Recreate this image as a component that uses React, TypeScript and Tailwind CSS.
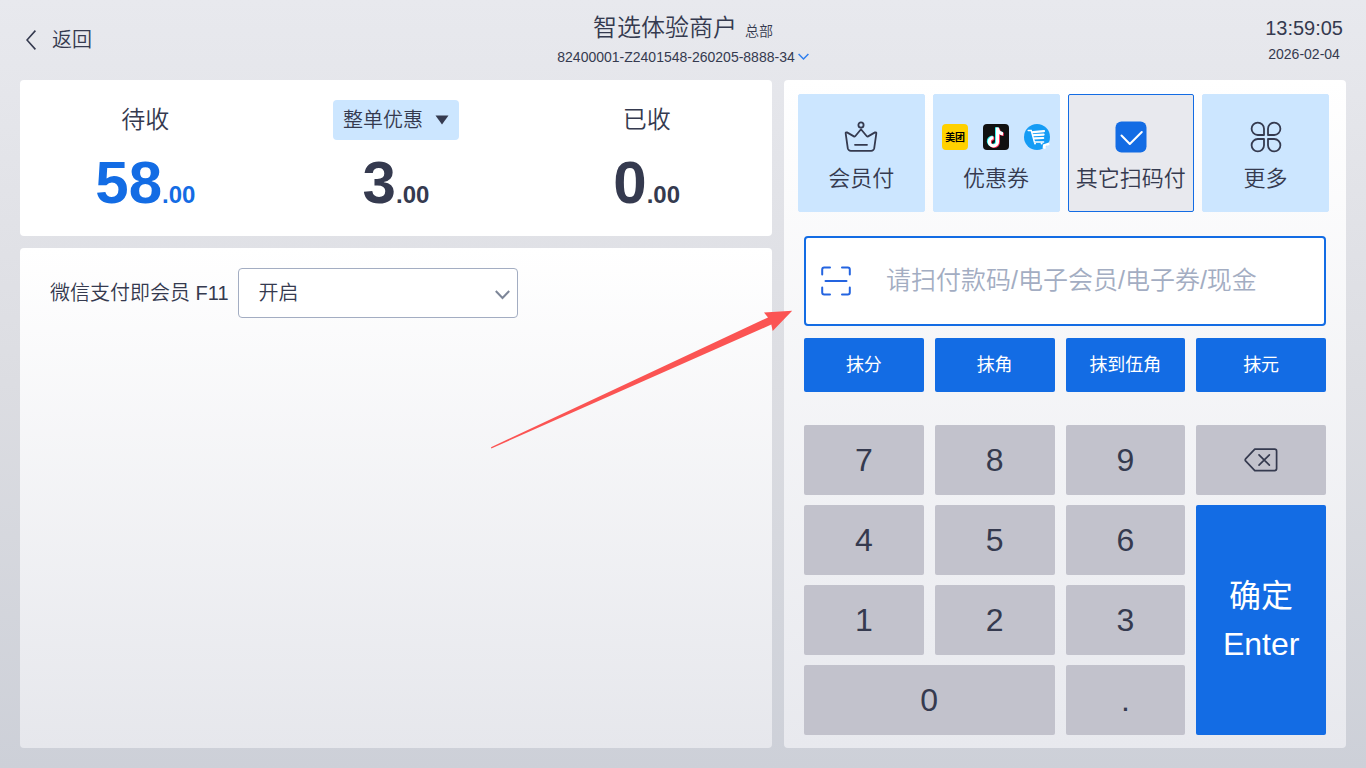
import { useState } from "react";

const AMOUNTS = [
  { label: "待收", int: "58", dec: ".00", color: "text-[#136ce4]" },
  { label: "整单优惠", int: "3", dec: ".00", color: "text-[#353a4f]", menu: true },
  { label: "已收", int: "0", dec: ".00", color: "text-[#353a4f]" },
];

const ROUNDING = ["抹分", "抹角", "抹到伍角", "抹元"];

const KEYPAD_COLS = "grid grid-cols-[120fr_120fr_120fr_130fr] gap-x-[11px]";
const KEY = "flex items-center justify-center rounded-xs bg-[#c2c2cc] text-[32px]";

const CrownIcon = () => (
  <svg width="34" height="32" viewBox="0 0 34 32" fill="none" stroke="currentColor" strokeWidth="1.8" strokeLinecap="round" strokeLinejoin="round">
    <circle cx="17" cy="4" r="2.6" />
    <path d="M17 8.2 L22.8 15.2 Q23.4 15.8 24.1 15.4 L31 11.4 Q32.6 11 32.3 12.6 L30.2 27.4 Q29.6 29.8 27.2 29.8 H6.8 Q4.4 29.8 3.8 27.4 L1.7 12.6 Q1.4 11 3 11.4 L9.9 15.4 Q10.6 15.8 11.2 15.2 Z" />
    <path d="M11 23.8 H23" />
  </svg>
);

const DouyinLogo = () => (
  <svg width="26" height="26" viewBox="0 0 26 26">
    <rect width="26" height="26" rx="4" fill="#111" />
    <g fill="none" strokeWidth="3.2">
      <path d="M13.6 3.2 V17.2 A4.1 4.1 0 1 1 9.5 13.1 M13.6 3.6 C14 7.4 16 9 19.2 9.2" stroke="#25f4ee" />
      <path d="M15.4 4.4 V18.2 A4.1 4.1 0 1 1 11.3 14.3 M15.4 5 C15.8 8.6 17.8 10.2 20.8 10.4" stroke="#fe2c55" />
      <path d="M14.5 3.6 V17.7 A4.1 4.1 0 1 1 10.4 13.6 M14.5 4.2 C14.9 7.9 16.9 9.6 20 9.8" stroke="#fff" />
    </g>
  </svg>
);

const CartLogo = () => (
  <svg width="26" height="26" viewBox="0 0 26 26">
    <circle cx="13" cy="13" r="13" fill="#159cf5" />
    <g fill="none" stroke="#fff" strokeLinecap="round">
      <path d="M4.2 6.4 H7.2 L10.4 18 H19.6" strokeWidth="1.5" />
      <path d="M9 8.2 L20 7.2 M9.8 11.2 L19.6 10.6 M10.6 14.4 L19.2 14" strokeWidth="2.2" />
    </g>
    <circle cx="11" cy="19.4" r="1" fill="#fff" />
    <circle cx="17.6" cy="19.4" r="1" fill="#fff" />
    <path d="M18.6 24.6 L19 20.6 L24.8 18.6 L25.6 21 L22 22 L21.4 25 Z" fill="#fff" />
  </svg>
);

const CheckedIcon = () => (
  <svg width="32" height="32" viewBox="0 0 32 32" fill="none">
    <rect x="0.5" y="0.5" width="31" height="31" rx="6" fill="#136ce4" />
    <path d="M6.5 14.5 L14.8 23 L26.8 11" stroke="#fff" strokeWidth="2" strokeLinecap="round" strokeLinejoin="round" />
  </svg>
);

const MoreIcon = () => (
  <svg width="32" height="32" viewBox="0 0 32 32" fill="none" stroke="currentColor" strokeWidth="1.8" strokeLinejoin="round">
    <path d="M14 14 H7.8 A6.2 6.2 0 1 1 14 7.8 Z" />
    <path d="M18 14 H24.2 A6.2 6.2 0 1 0 18 7.8 Z" />
    <path d="M14 18 H7.8 A6.2 6.2 0 1 0 14 24.2 Z" />
    <path d="M18 18 H24.2 A6.2 6.2 0 1 1 18 24.2 Z" />
  </svg>
);

const ScanIcon = () => (
  <svg width="30" height="30" viewBox="0 0 30 30" fill="none" stroke="#2464e0" strokeWidth="2" strokeLinecap="round" strokeLinejoin="round">
    <path d="M1.2 8.6 V3.4 Q1.2 1.4 3.2 1.4 H9 M21 1.4 H26.8 Q28.8 1.4 28.8 3.4 V8.6 M28.8 21.4 V26.6 Q28.8 28.6 26.8 28.6 H21 M9 28.6 H3.2 Q1.2 28.6 1.2 26.6 V21.4" />
    <path d="M4.5 15 H25.5" />
  </svg>
);

const DeleteIcon = () => (
  <svg width="34" height="24" viewBox="0 0 34 24" fill="none" stroke="currentColor" strokeWidth="1.7" strokeLinecap="round" strokeLinejoin="round">
    <path d="M10.8 1.2 H30.6 Q32.6 1.2 32.6 3.2 V20.6 Q32.6 22.6 30.6 22.6 H10.8 L1.8 13.2 Q0.6 11.9 1.8 10.6 Z" />
    <path d="M15 6.8 L25.4 17.2 M25.4 6.8 L15 17.2" />
  </svg>
);

const PAY_METHODS = [
  { name: "会员付", icon: <CrownIcon /> },
  {
    name: "优惠券",
    icon: (
      <span className="flex items-center gap-[15px]">
        <span className="flex size-[26px] items-center justify-center rounded bg-[#ffd100] text-[10px] font-bold text-black">美团</span>
        <DouyinLogo />
        <CartLogo />
      </span>
    ),
  },
  { name: "其它扫码付", icon: <CheckedIcon /> },
  { name: "更多", icon: <MoreIcon /> },
];

const CheckoutPage: React.FC = () => {
  const [method, setMethod] = useState("其它扫码付");
  const [code, setCode] = useState("");
  const [wechatMember, setWechatMember] = useState("开启");

  const press = (key: string) => setCode((prev) => prev + key);

  return (
    <div className="relative flex min-h-screen flex-col bg-linear-to-b from-[#e8e9ee] via-[#dcdde2] to-[#cdd0d8] px-5 pb-5 font-['Liberation_Sans','Noto_Sans_CJK_SC',sans-serif] font-[350] text-[#353a4f]">

      {/* Header */}
      <header className="grid h-20 grid-cols-[1fr_auto_1fr] items-start">
        <button className="mt-6 flex h-8 items-center gap-4 justify-self-start pl-[6px] text-xl">
          <svg width="10" height="20" viewBox="0 0 10 20" fill="none" stroke="currentColor" strokeWidth="1.6">
            <path d="M9.4 0.6 L1 10 L9.4 19.4" />
          </svg>
          返回
        </button>
        <div className="flex flex-col items-center pt-3">
          <h1 className="flex items-baseline gap-2 text-2xl leading-8">
            智选体验商户 <small className="text-sm">总部</small>
          </h1>
          <button className="flex h-[26px] items-center gap-[3px] text-sm">
            82400001-Z2401548-260205-8888-34
            <svg width="11" height="8" viewBox="0 0 11 8" fill="none" stroke="#2f7fee" strokeWidth="1.5">
              <path d="M0.6 1 L5.5 6 L10.4 1" />
            </svg>
          </button>
        </div>
        <div className="flex flex-col items-center justify-self-end pr-[3px] pt-[14px]">
          <time className="text-xl leading-7">13:59:05</time>
          <time className="text-sm leading-6">2026-02-04</time>
        </div>
      </header>

      <main className="grid flex-1 grid-cols-[752fr_562fr] gap-3">
        <div className="flex flex-col gap-3">
          {/* Amounts */}
          <section className="grid h-[156px] grid-cols-3 rounded bg-white pt-5">
            {AMOUNTS.map((item) => (
              <div key={item.label} className="flex flex-col items-center">
                {item.menu ? (
                  <button className="flex h-10 items-center gap-3 rounded bg-[#cce6ff] px-[10px] text-xl">
                    {item.label}
                    <svg width="14" height="10" viewBox="0 0 14 10" fill="currentColor">
                      <path d="M0.5 0.5 H13.5 L7 9.5 Z" />
                    </svg>
                  </button>
                ) : (
                  <h2 className="flex h-10 items-center text-2xl">{item.label}</h2>
                )}
                <p className={`mt-2 font-bold leading-[70px] ${item.color}`}>
                  <span className="text-[60px]">{item.int}</span>
                  <span className="text-2xl">{item.dec}</span>
                </p>
              </div>
            ))}
          </section>

          {/* Options */}
          <section className="flex-1 rounded bg-linear-to-b from-white to-[#e6e7ec] px-[30px] pt-5">
            <div className="flex items-center gap-[9px] text-xl">
              <label htmlFor="wechat-member">微信支付即会员 F11</label>
              <div className="relative">
                <select
                  id="wechat-member"
                  value={wechatMember}
                  onChange={(e) => setWechatMember(e.target.value)}
                  className="h-[50px] w-[280px] appearance-none rounded border border-[#a3adc2] bg-white pl-5"
                >
                  <option>开启</option>
                  <option>关闭</option>
                </select>
                <svg className="pointer-events-none absolute right-2 top-[22px]" width="15" height="10" viewBox="0 0 15 10" fill="none" stroke="#7d8698" strokeWidth="2">
                  <path d="M0.8 1 L7.5 8 L14.2 1" />
                </svg>
              </div>
            </div>
          </section>
        </div>

        {/* Payment panel */}
        <section className="flex flex-col rounded bg-linear-to-b from-white to-[#e8e9ee] pb-[13px] pt-[14px]">
          <div className="grid grid-cols-4 gap-2 pl-[14px] pr-[17px]">
            {PAY_METHODS.map((m) => (
              <button
                key={m.name}
                onClick={() => setMethod(m.name)}
                className={`flex h-[118px] flex-col items-center justify-center gap-2 whitespace-nowrap rounded-xs border pt-3 text-[22px] ${
                  method === m.name ? "border-[#136ce4] bg-[#e8e9ee]" : "border-[#cce6ff] bg-[#cce6ff]"
                }`}
              >
                <span className="flex h-8 items-center">{m.icon}</span>
                <span className="leading-9">{m.name}</span>
              </button>
            ))}
          </div>

          <div className="flex flex-1 flex-col px-5 pt-6">
            <label className="flex h-[90px] items-center gap-[35px] rounded border-2 border-[#136ce4] bg-white px-[15px]">
              <ScanIcon />
              <input
                value={code}
                onChange={(e) => setCode(e.target.value)}
                aria-label="付款码"
                placeholder="请扫付款码/电子会员/电子券/现金"
                className="min-w-0 flex-1 text-[25px] outline-none placeholder:text-[#a3adc2]"
              />
            </label>

            <div className={`mt-3 ${KEYPAD_COLS}`}>
              {ROUNDING.map((r) => (
                <button key={r} className="h-[54px] rounded-xs bg-[#136ce4] text-lg font-normal text-white">
                  {r}
                </button>
              ))}
            </div>

            {/* Keypad */}
            <div className={`mt-[33px] flex-1 auto-rows-fr gap-y-[10px] ${KEYPAD_COLS}`}>
              {["7", "8", "9"].map((k) => (
                <button key={k} onClick={() => press(k)} className={KEY}>{k}</button>
              ))}
              <button onClick={() => setCode(code.slice(0, -1))} aria-label="删除" className={KEY}>
                <DeleteIcon />
              </button>
              {["4", "5", "6"].map((k) => (
                <button key={k} onClick={() => press(k)} className={KEY}>{k}</button>
              ))}
              <button className="row-span-3 rounded-xs bg-[#136ce4] text-[32px] font-normal leading-[48px] text-white">
                确定
                <br />
                Enter
              </button>
              {["1", "2", "3"].map((k) => (
                <button key={k} onClick={() => press(k)} className={KEY}>{k}</button>
              ))}
              <button onClick={() => press("0")} className={`col-span-2 ${KEY}`}>0</button>
              <button onClick={() => press(".")} className={KEY}>.</button>
            </div>
          </div>
        </section>
      </main>

      {/* Pointer to the scan box */}
      <svg className="pointer-events-none absolute left-[490px] top-[310px]" width="303" height="139" viewBox="490 310 303 139">
        <path d="M491 447.2 L768 317.5 L764 312.5 L792.2 310.7 L772.7 331 L771.3 324.6 L491.3 448.4 Z" fill="#fb5453" />
      </svg>
    </div>
  );
};

export default CheckoutPage;
